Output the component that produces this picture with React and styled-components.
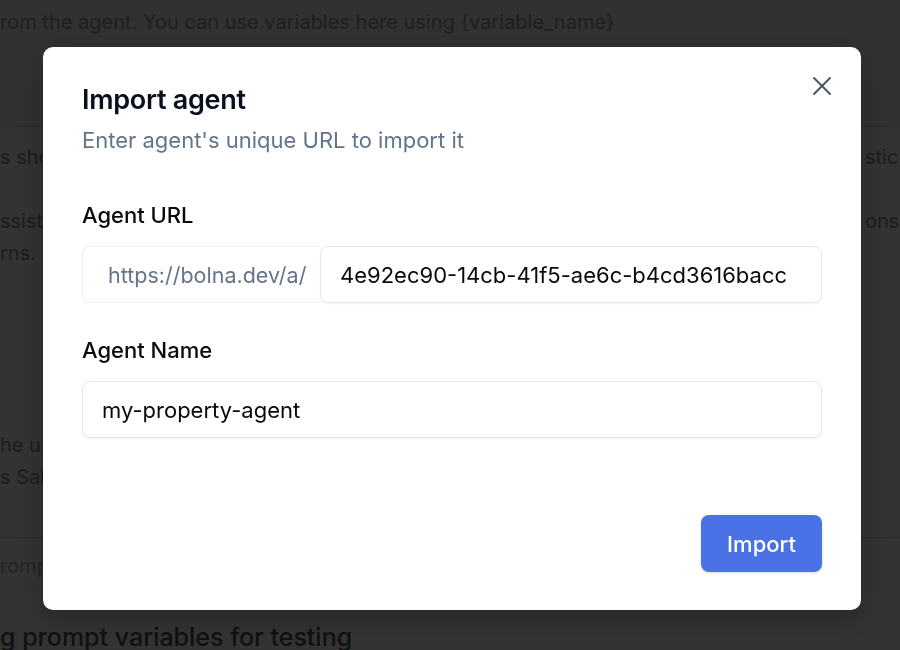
import React from 'react'
import styled, { createGlobalStyle } from 'styled-components'
import { X } from 'lucide-react'

const GlobalStyle = createGlobalStyle`
  html, body {
    margin: 0;
    padding: 0;
  }
  body {
    font-family: Inter, "Noto Sans", sans-serif;
    background: #ffffff;
    overflow: hidden;
  }
`

const Page = styled.div`
  width: 900px;
  height: 650px;
  overflow: hidden;
  display: flex;
  flex-direction: column;
  color: #8a8a8a;
  font-size: 20px;

  & > * {
    flex-shrink: 0;
  }
`

const TopSection = styled.div`
  height: 127px;
  box-sizing: border-box;
  padding-top: 8px;
  background: #f2f2f2;
  border-bottom: 1px solid #d4d4d4;
  line-height: 28px;
  white-space: nowrap;
  color: #9a9a9a;
`

const PromptArea = styled.div`
  padding: 14px 0 44px;
  border-bottom: 1px solid #d4d4d4;
`

const PromptRow = styled.div`
  display: grid;
  grid-template-columns: 865px 1fr;
  height: 32px;
  line-height: 32px;
  white-space: nowrap;
  overflow: hidden;

  span {
    overflow: hidden;
  }
`

const BottomSection = styled.div`
  padding-top: 14px;
  display: flex;
  flex-direction: column;
  gap: 41px;
  white-space: nowrap;
`

const MutedLine = styled.div`
  line-height: 28px;
  color: #b4b4b4;
`

const SectionHeading = styled.div`
  font-size: 25px;
  line-height: 32px;
  font-weight: 500;
  color: #555555;
`

const Overlay = styled.div`
  position: fixed;
  inset: 0;
  background: rgba(0, 0, 0, 0.8);
  display: flex;
  align-items: flex-start;
  padding: 47px 0 0 43px;
`

const Dialog = styled.div`
  position: relative;
  width: 818px;
  height: 563px;
  box-sizing: border-box;
  padding: 37px 39px 38px;
  background: #ffffff;
  border-radius: 10px;
  box-shadow: 0 10px 30px rgba(0, 0, 0, 0.25);
  display: flex;
  flex-direction: column;
`

const CloseButton = styled.button`
  position: absolute;
  top: 23px;
  right: 23px;
  width: 32px;
  height: 32px;
  padding: 0;
  border: none;
  background: none;
  color: #4b5563;
  display: flex;
  align-items: center;
  justify-content: center;
  cursor: pointer;
`

const Title = styled.h2`
  margin: 0;
  font-size: 27px;
  line-height: 32px;
  font-weight: 600;
  letter-spacing: -0.01em;
  color: #0a0f1e;
`

const Description = styled.p`
  margin: 10px 0 0;
  font-size: 22px;
  line-height: 28px;
  color: #64748b;
`

const Field = styled.div`
  margin-top: ${p => p.$top}px;
  display: flex;
  flex-direction: column;
  gap: 17px;
`

const Label = styled.label`
  font-size: 22px;
  line-height: 28px;
  font-weight: 500;
  color: #0a0a0a;
`

const UrlGroup = styled.div`
  display: flex;
`

const Prefix = styled.div`
  width: 238px;
  height: 57px;
  box-sizing: border-box;
  padding-left: 25px;
  display: flex;
  align-items: center;
  border: 1px solid #eceef2;
  border-right: none;
  border-radius: 8px 0 0 8px;
  font-size: 21.5px;
  color: #64748b;
`

const TextInput = styled.input`
  width: 100%;
  min-width: 0;
  height: 57px;
  box-sizing: border-box;
  padding: 0 19px;
  border: 1px solid #e5e7eb;
  border-radius: 8px;
  box-shadow: 0 1px 2px rgba(0, 0, 0, 0.05);
  background: #ffffff;
  font-family: inherit;
  font-size: 22px;
  color: #0a0a0a;
  outline: none;
`

const SlugInput = styled(TextInput)`
  flex: 1;
  width: auto;
`

const Footer = styled.div`
  margin-top: auto;
  display: flex;
  justify-content: flex-end;
`

const ImportButton = styled.button`
  width: 121px;
  height: 57px;
  border: none;
  border-radius: 8px;
  background: #4a72e6;
  box-shadow: 0 1px 3px rgba(0, 0, 0, 0.15);
  color: #ffffff;
  font-family: inherit;
  font-size: 22px;
  font-weight: 500;
  cursor: pointer;
`

const promptRows = [
  ['s should be brief, natural and characteri', 'stic of a real agent'],
  ['', ''],
  ['ssistant helping callers with property questi', 'ons and'],
  ['rns.', ''],
  ['', ''],
  ['', ''],
  ['', ''],
  ['', ''],
  ['', ''],
  ['he user is interested in a property', ''],
  ['s Sales team will follow up shortly', ''],
]

function App() {
  return (
    <>
      <GlobalStyle />
      <Page>
        <TopSection>rom the agent. You can use variables here using {'{variable_name}'}</TopSection>
        <PromptArea>
          {promptRows.map((row, i) => (
            <PromptRow key={i}>
              <span>{row[0]}</span>
              <span>{row[1]}</span>
            </PromptRow>
          ))}
        </PromptArea>
        <BottomSection>
          <MutedLine>rompt variables</MutedLine>
          <SectionHeading>g prompt variables for testing</SectionHeading>
        </BottomSection>
      </Page>
      <Overlay>
        <Dialog>
          <CloseButton aria-label="Close">
            <X size={32} strokeWidth={1.5} />
          </CloseButton>
          <Title>Import agent</Title>
          <Description>Enter agent's unique URL to import it</Description>
          <Field $top={47}>
            <Label>Agent URL</Label>
            <UrlGroup>
              <Prefix>https://bolna.dev/a/</Prefix>
              <SlugInput readOnly defaultValue="4e92ec90-14cb-41f5-ae6c-b4cd3616bacc" />
            </UrlGroup>
          </Field>
          <Field $top={33}>
            <Label>Agent Name</Label>
            <TextInput readOnly defaultValue="my-property-agent" />
          </Field>
          <Footer>
            <ImportButton>Import</ImportButton>
          </Footer>
        </Dialog>
      </Overlay>
    </>
  )
}

export default App
